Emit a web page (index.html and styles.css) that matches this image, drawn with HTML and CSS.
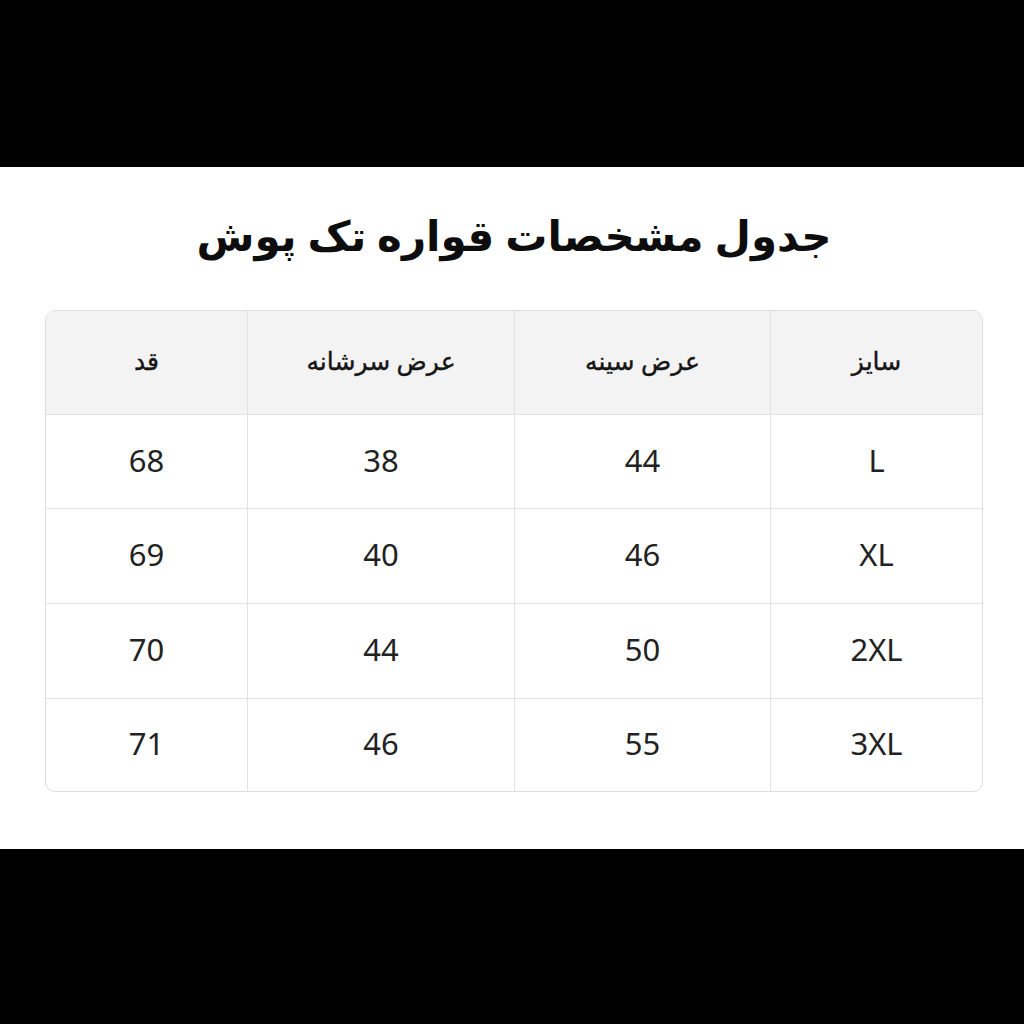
FILE: index.html
```html
<!DOCTYPE html>
<html lang="fa" dir="rtl">
<head>
<meta charset="utf-8">
<link rel="stylesheet" href="styles.css">
</head>
<body>
<div class="bar top"></div>
<main class="sheet">
  <h1 class="title">جدول مشخصات قواره تک پوش</h1>
  <div class="table">
    <div class="cell head">سایز</div>
    <div class="cell head">عرض سینه</div>
    <div class="cell head">عرض سرشانه</div>
    <div class="cell head">قد</div>

    <div class="cell r1">L</div>
    <div class="cell r1">44</div>
    <div class="cell r1">38</div>
    <div class="cell r1">68</div>

    <div class="cell r2">XL</div>
    <div class="cell r2">46</div>
    <div class="cell r2">40</div>
    <div class="cell r2">69</div>

    <div class="cell r3">2XL</div>
    <div class="cell r3">50</div>
    <div class="cell r3">44</div>
    <div class="cell r3">70</div>

    <div class="cell r4">3XL</div>
    <div class="cell r4">55</div>
    <div class="cell r4">46</div>
    <div class="cell r4">71</div>
  </div>
</main>
<div class="bar bottom"></div>
</body>
</html>
```
FILE: styles.css
```css
html, body {
  margin: 0;
  padding: 0;
  background: #000;
}
body {
  width: 1024px;
  height: 1024px;
  display: flex;
  flex-direction: column;
  font-family: "Noto Sans", "DejaVu Sans", sans-serif;
}
.bar.top { height: 167px; background: #000; }
.bar.bottom { flex: 1; background: #000; }
.sheet {
  height: 682px;
  background: #fff;
  display: flex;
  flex-direction: column;
  align-items: flex-start;
  box-sizing: border-box;
  padding: 0 41px 0 45px;
}
.title {
  margin: 0;
  height: 143px;
  width: 100%;
  display: flex;
  align-items: center;
  justify-content: center;
  padding-bottom: 8px;
  box-sizing: border-box;
  font-size: 42px;
  font-weight: 700;
  color: #0d0d0d;
}
.table {
  width: 938px;
  display: grid;
  grid-template-columns: 212px 256px 267px 1fr;
  grid-template-rows: 103px 94px 95px 95px 93px;
  border: 1.5px solid #dedede;
  border-radius: 10px;
  overflow: hidden;
  box-sizing: border-box;
}
.cell {
  display: flex;
  align-items: center;
  justify-content: center;
  border-left: 1px solid #e2e2e2;
  border-top: 1px solid #e2e2e2;
  font-size: 31px;
  color: #222;
  padding-bottom: 4px;
  box-sizing: border-box;
}
.cell:nth-child(4n) { border-left: none; }
.cell.head {
  border-top: none;
  background: #f3f3f3;
  font-size: 25px;
  color: #151515;
  -webkit-text-stroke: 0.4px #151515;
  padding-bottom: 6px;
}
```
